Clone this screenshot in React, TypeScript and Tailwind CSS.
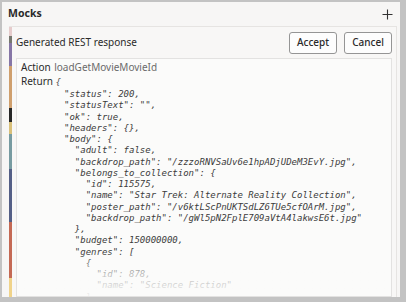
import React from "react";

const strip = [
  { h: "h-[9px]", c: "bg-[#e6cccc]" },
  { h: "h-[7px]", c: "bg-[#76786f]" },
  { h: "h-[23px]", c: "bg-[#8676a6]" },
  { h: "h-[42px]", c: "bg-[#cf9f6d]" },
  { h: "h-[14px]", c: "bg-[#262626]" },
  { h: "h-[12px]", c: "bg-[#d9c07a]" },
  { h: "h-[35px]", c: "bg-[#779ba1]" },
  { h: "h-[53px]", c: "bg-[#545f86]" },
  { h: "h-[56px]", c: "bg-[#c46954]" },
  { h: "flex-1", c: "bg-[#f0d38a]" },
];

const code = `"status": 200,
"statusText": "",
"ok": true,
"headers": {},
"body": {
  "adult": false,
  "backdrop_path": "/zzzoRNVSaUv6e1hpADjUDeM3EvY.jpg",
  "belongs_to_collection": {
    "id": 115575,
    "name": "Star Trek: Alternate Reality Collection",
    "poster_path": "/v6ktLScPnUKTSdLZ6TUe5cfOArM.jpg",
    "backdrop_path": "/gWl5pN2FplE709aVtA4lakwsE6t.jpg"
  },
  "budget": 150000000,
  "genres": [
    {
      "id": 878,
      "name": "Science Fiction"
    },`;

export default function App() {
  return (
    <div className="w-[406px] h-[302px] bg-[#c3c3c3] pt-[2px] pl-[2px] pr-[6px] pb-[5px] font-['Noto_Sans',sans-serif] text-[#2a2a2a]">
      <div className="h-full bg-[#f7f6f5] flex flex-col overflow-hidden">
        {/* panel header */}
        <div className="h-[24px] shrink-0 flex items-center justify-between pl-[6px] pr-[7px]">
          <span className="text-[10.5px] font-bold">Mocks</span>
          <svg width="11" height="11" viewBox="0 0 11 11" className="text-[#333]">
            <path d="M5.5 0.5v10M0.5 5.5h10" stroke="currentColor" strokeWidth="1.1" />
          </svg>
        </div>

        {/* card */}
        <div className="flex-1 min-h-0 flex ml-[7px] mr-[3px] border-t border-r border-[#e6e4e2] bg-[#f8f7f6]">
          <div className="w-[3px] flex flex-col shrink-0">
            {strip.map((s, i) => (
              <div key={i} className={`${s.h} ${s.c}`} />
            ))}
          </div>
          <div className="flex-1 min-w-0 flex flex-col pl-[4px] pr-[4px]">
            <div className="h-[31px] shrink-0 flex items-center justify-between">
              <span className="text-[10px]">Generated REST response</span>
              <div className="flex gap-[7px]">
                <button className="w-[48px] h-[22px] rounded-[3px] border border-[#959595] bg-[#fdfdfd] text-[10px] font-medium">
                  Accept
                </button>
                <button className="w-[48px] h-[22px] rounded-[3px] border border-[#959595] bg-[#fdfdfd] text-[10px] font-medium">
                  Cancel
                </button>
              </div>
            </div>

            {/* code box */}
            <div className="relative flex-1 min-h-0 overflow-hidden border border-[#e3e2e1] bg-[#fbfbfa] pl-[4px] pt-[1px]">
              <div className="text-[10px] leading-[14px]">
                Action <span className="ml-[1px] text-[#6b6b6b]">loadGetMovieMovieId</span>
              </div>
              <div className="text-[10px] leading-[14px]">
                Return{" "}
                <span className="font-['DejaVu_Sans_Mono',monospace] italic text-[9px] text-[#555]">{"{"}</span>
              </div>
              <pre className="pl-[43px] font-['DejaVu_Sans_Mono',monospace] italic text-[9px] leading-[11.25px] text-[#3c3c3c]">
                {code}
              </pre>
              <div className="absolute left-0 right-0 bottom-0 h-[44px] bg-gradient-to-b from-[#fbfbfa00] via-[#fbfbfaaa] to-[#fbfbfaee]" />
            </div>
          </div>
        </div>
      </div>
    </div>
  );
}
